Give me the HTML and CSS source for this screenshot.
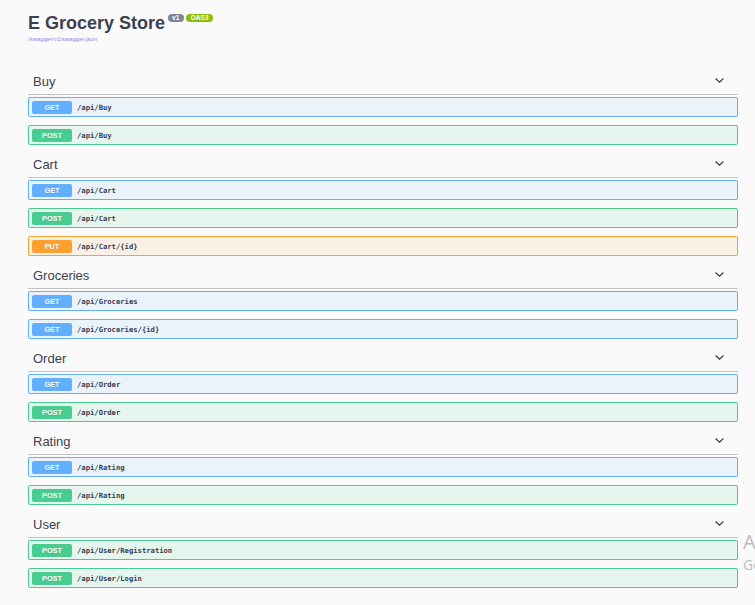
FILE: index.html
```html
<!DOCTYPE html>
<html lang="en">
<head>
<meta charset="utf-8">
<title>E Grocery Store</title>
<link rel="stylesheet" href="styles.css">
</head>
<body>
<div class="page">
  <header class="info">
    <div class="title-row">
      <h1 class="title">E Grocery Store</h1>
      <span class="pill pill-v">v1</span>
      <span class="pill pill-oas">OAS3</span>
    </div>
    <a class="url" href="#">/swagger/v1/swagger.json</a>
  </header>

  <section class="tag">
    <div class="tag-head"><h3>Buy</h3><svg class="chev" width="9" height="5" viewBox="0 0 9 5"><path d="M0.6 0.6 L4.5 4.2 L8.4 0.6" fill="none" stroke="#3b4151" stroke-width="1.3"/></svg></div>
    <div class="ops">
      <div class="op op-get"><span class="method">GET</span><span class="path">/api/Buy</span></div>
      <div class="op op-post"><span class="method">POST</span><span class="path">/api/Buy</span></div>
    </div>
  </section>

  <section class="tag">
    <div class="tag-head"><h3>Cart</h3><svg class="chev" width="9" height="5" viewBox="0 0 9 5"><path d="M0.6 0.6 L4.5 4.2 L8.4 0.6" fill="none" stroke="#3b4151" stroke-width="1.3"/></svg></div>
    <div class="ops">
      <div class="op op-get"><span class="method">GET</span><span class="path">/api/Cart</span></div>
      <div class="op op-post"><span class="method">POST</span><span class="path">/api/Cart</span></div>
      <div class="op op-put"><span class="method">PUT</span><span class="path">/api/Cart/{id}</span></div>
    </div>
  </section>

  <section class="tag">
    <div class="tag-head"><h3>Groceries</h3><svg class="chev" width="9" height="5" viewBox="0 0 9 5"><path d="M0.6 0.6 L4.5 4.2 L8.4 0.6" fill="none" stroke="#3b4151" stroke-width="1.3"/></svg></div>
    <div class="ops">
      <div class="op op-get"><span class="method">GET</span><span class="path">/api/Groceries</span></div>
      <div class="op op-get"><span class="method">GET</span><span class="path">/api/Groceries/{id}</span></div>
    </div>
  </section>

  <section class="tag">
    <div class="tag-head"><h3>Order</h3><svg class="chev" width="9" height="5" viewBox="0 0 9 5"><path d="M0.6 0.6 L4.5 4.2 L8.4 0.6" fill="none" stroke="#3b4151" stroke-width="1.3"/></svg></div>
    <div class="ops">
      <div class="op op-get"><span class="method">GET</span><span class="path">/api/Order</span></div>
      <div class="op op-post"><span class="method">POST</span><span class="path">/api/Order</span></div>
    </div>
  </section>

  <section class="tag">
    <div class="tag-head"><h3>Rating</h3><svg class="chev" width="9" height="5" viewBox="0 0 9 5"><path d="M0.6 0.6 L4.5 4.2 L8.4 0.6" fill="none" stroke="#3b4151" stroke-width="1.3"/></svg></div>
    <div class="ops">
      <div class="op op-get"><span class="method">GET</span><span class="path">/api/Rating</span></div>
      <div class="op op-post"><span class="method">POST</span><span class="path">/api/Rating</span></div>
    </div>
  </section>

  <section class="tag">
    <div class="tag-head"><h3>User</h3><svg class="chev" width="9" height="5" viewBox="0 0 9 5"><path d="M0.6 0.6 L4.5 4.2 L8.4 0.6" fill="none" stroke="#3b4151" stroke-width="1.3"/></svg></div>
    <div class="ops">
      <div class="op op-post"><span class="method">POST</span><span class="path">/api/User/Registration</span></div>
      <div class="op op-post"><span class="method">POST</span><span class="path">/api/User/Login</span></div>
    </div>
  </section>
</div>

<div class="watermark">
  <div class="wm-1">Activate Windows</div>
  <div class="wm-2">Go to Settings to activate Windows.</div>
</div>
</body>
</html>
```

FILE: styles.css
```css
html, body {
  margin: 0;
  padding: 0;
  overflow: hidden;
  background: #fafafa;
}

body {
  position: relative;
  width: 755px;
  height: 605px;
  font-family: "Liberation Sans", Arial, sans-serif;
  color: #3b4151;
}

.page {
  padding: 13px 17px 0 28px;
}

.info {
  display: flex;
  flex-direction: column;
  align-items: flex-start;
  margin-bottom: 27px;
}

.title-row {
  display: flex;
  align-items: flex-start;
}

.title {
  margin: 0;
  font-size: 18px;
  line-height: 20px;
  font-weight: bold;
  color: #3b4151;
}

.pill {
  margin-top: 1px;
  margin-left: 2.5px;
  height: 8px;
  line-height: 8px;
  padding: 0 4.5px;
  border-radius: 4px;
  font-size: 6.5px;
  font-weight: bold;
  color: #fff;
}

.pill-v { background: #7d8492; }
.pill-oas { background: #89bf04; }

.url {
  margin-top: 2px;
  font-size: 6px;
  line-height: 8px;
  color: #8a8ce6;
  text-decoration: none;
}

.tag-head {
  height: 24px;
  display: flex;
  align-items: center;
  justify-content: space-between;
  padding: 0 14px 0 5px;
  border-bottom: 1px solid rgba(59, 65, 81, 0.3);
}

.tag-head h3 {
  margin: 0;
  font-size: 13px;
  line-height: 24px;
  font-weight: normal;
  color: #3b4151;
}

.chev {
  display: block;
  margin-bottom: 4px;
}

.ops {
  padding-top: 2px;
}

.op {
  box-sizing: border-box;
  height: 20px;
  display: flex;
  align-items: center;
  padding: 0 3px;
  margin-bottom: 8px;
  border: 1px solid;
  border-radius: 2px;
}

.op-get { background: rgba(97, 175, 254, 0.1); border-color: #61affe; }
.op-post { background: rgba(73, 204, 144, 0.1); border-color: #49cc90; }
.op-put { background: rgba(252, 161, 48, 0.1); border-color: #fca130; }

.method {
  width: 40px;
  height: 13px;
  line-height: 13px;
  border-radius: 2px;
  text-align: center;
  font-size: 7.3px;
  font-weight: bold;
  color: #fff;
  text-shadow: 0 1px 0 rgba(0, 0, 0, 0.1);
}

.op-get .method { background: #61affe; }
.op-post .method { background: #49cc90; }
.op-put .method { background: #fca130; }

.path {
  margin-left: 5px;
  font-family: "DejaVu Sans Mono", "Liberation Mono", monospace;
  font-size: 7.2px;
  font-weight: bold;
  color: #3b4151;
}

.watermark {
  position: absolute;
  left: 743px;
  top: 530px;
  white-space: nowrap;
  font-family: "Open Sans", "Liberation Sans", sans-serif;
  color: #bdbdbd;
}

.wm-1 {
  font-size: 20px;
  line-height: 24px;
}

.wm-2 {
  margin-top: 1px;
  font-size: 14px;
  line-height: 20px;
}
```
